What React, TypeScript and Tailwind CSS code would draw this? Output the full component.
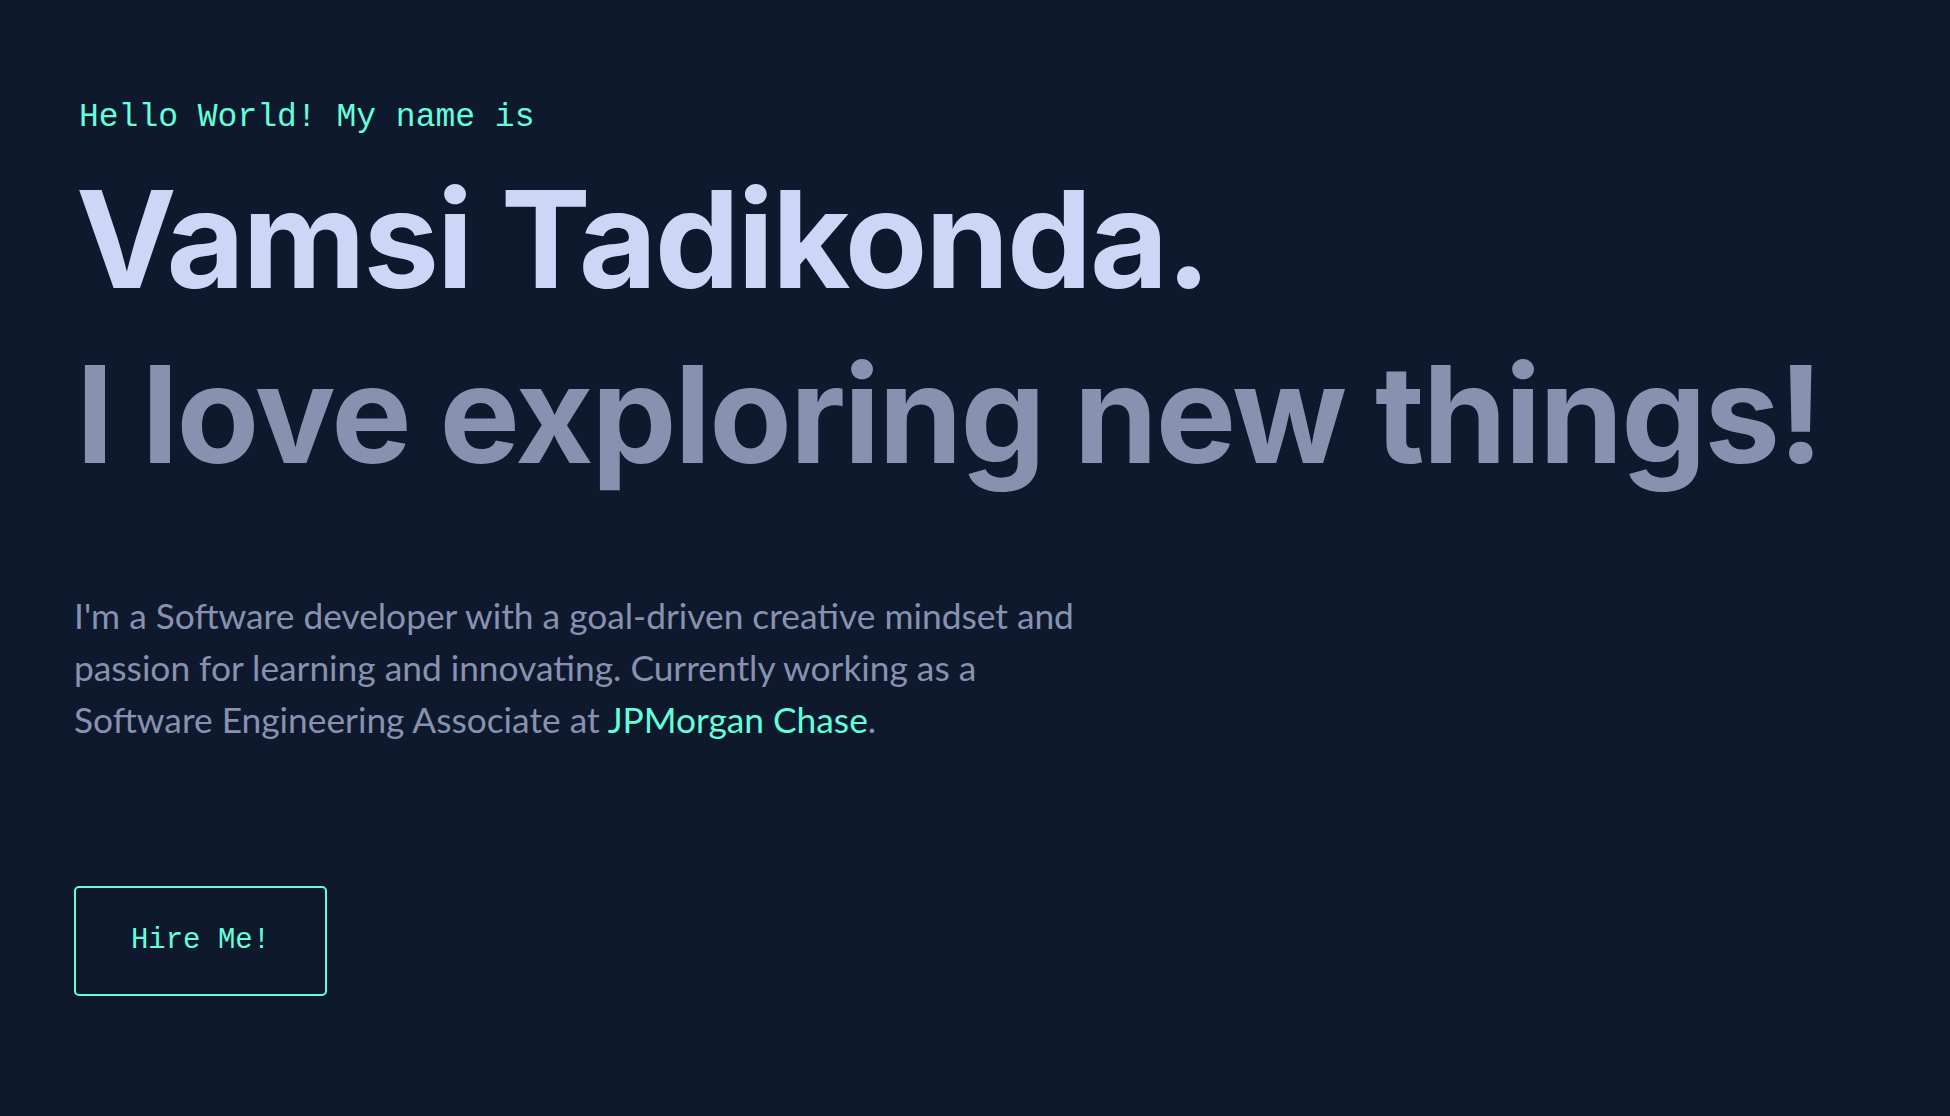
export default function App() {
    return (
        <div className="min-h-screen w-full bg-[#0e192e] overflow-hidden">
            <section className="flex flex-col items-start pl-[74px] pt-[93px]">
                {/* Intro line */}
                <p className="pl-[5px] font-['Liberation_Mono',monospace] text-[33px] leading-[1.5] text-[#64ffda]">
                    Hello World! My name is
                </p>

                {/* Name + tagline */}
                <h1 className="ml-[2px] mt-[22px] whitespace-nowrap font-['Inter',sans-serif] text-[135px] font-bold leading-[1.1] tracking-[-0.017em] text-[#ccd6f6]">
                    Vamsi Tadikonda.
                </h1>
                <h2 className="ml-[2px] mt-[27px] whitespace-nowrap font-['Inter',sans-serif] text-[135px] font-bold leading-[1.1] tracking-[-0.015em] text-[#8892b0]">
                    I love exploring new things!
                </h2>

                {/* About blurb */}
                <p className="mt-[101px] font-['Lato',sans-serif] text-[35.3px] leading-[52px] text-[#8892b0]">
                    I'm a Software developer with a goal-driven creative mindset and
                    <br />
                    passion for learning and innovating. Currently working as a
                    <br />
                    Software Engineering Associate at{" "}
                    <a href="#" className="text-[#64ffda]">
                        JPMorgan Chase
                    </a>
                    .
                </p>

                {/* CTA */}
                <button className="mt-[140px] flex h-[110px] w-[253px] items-center justify-center rounded-[5px] border-2 border-[#64ffda] font-['Liberation_Mono',monospace] text-[29px] text-[#64ffda]">
                    Hire Me!
                </button>
            </section>
        </div>
    )
}
